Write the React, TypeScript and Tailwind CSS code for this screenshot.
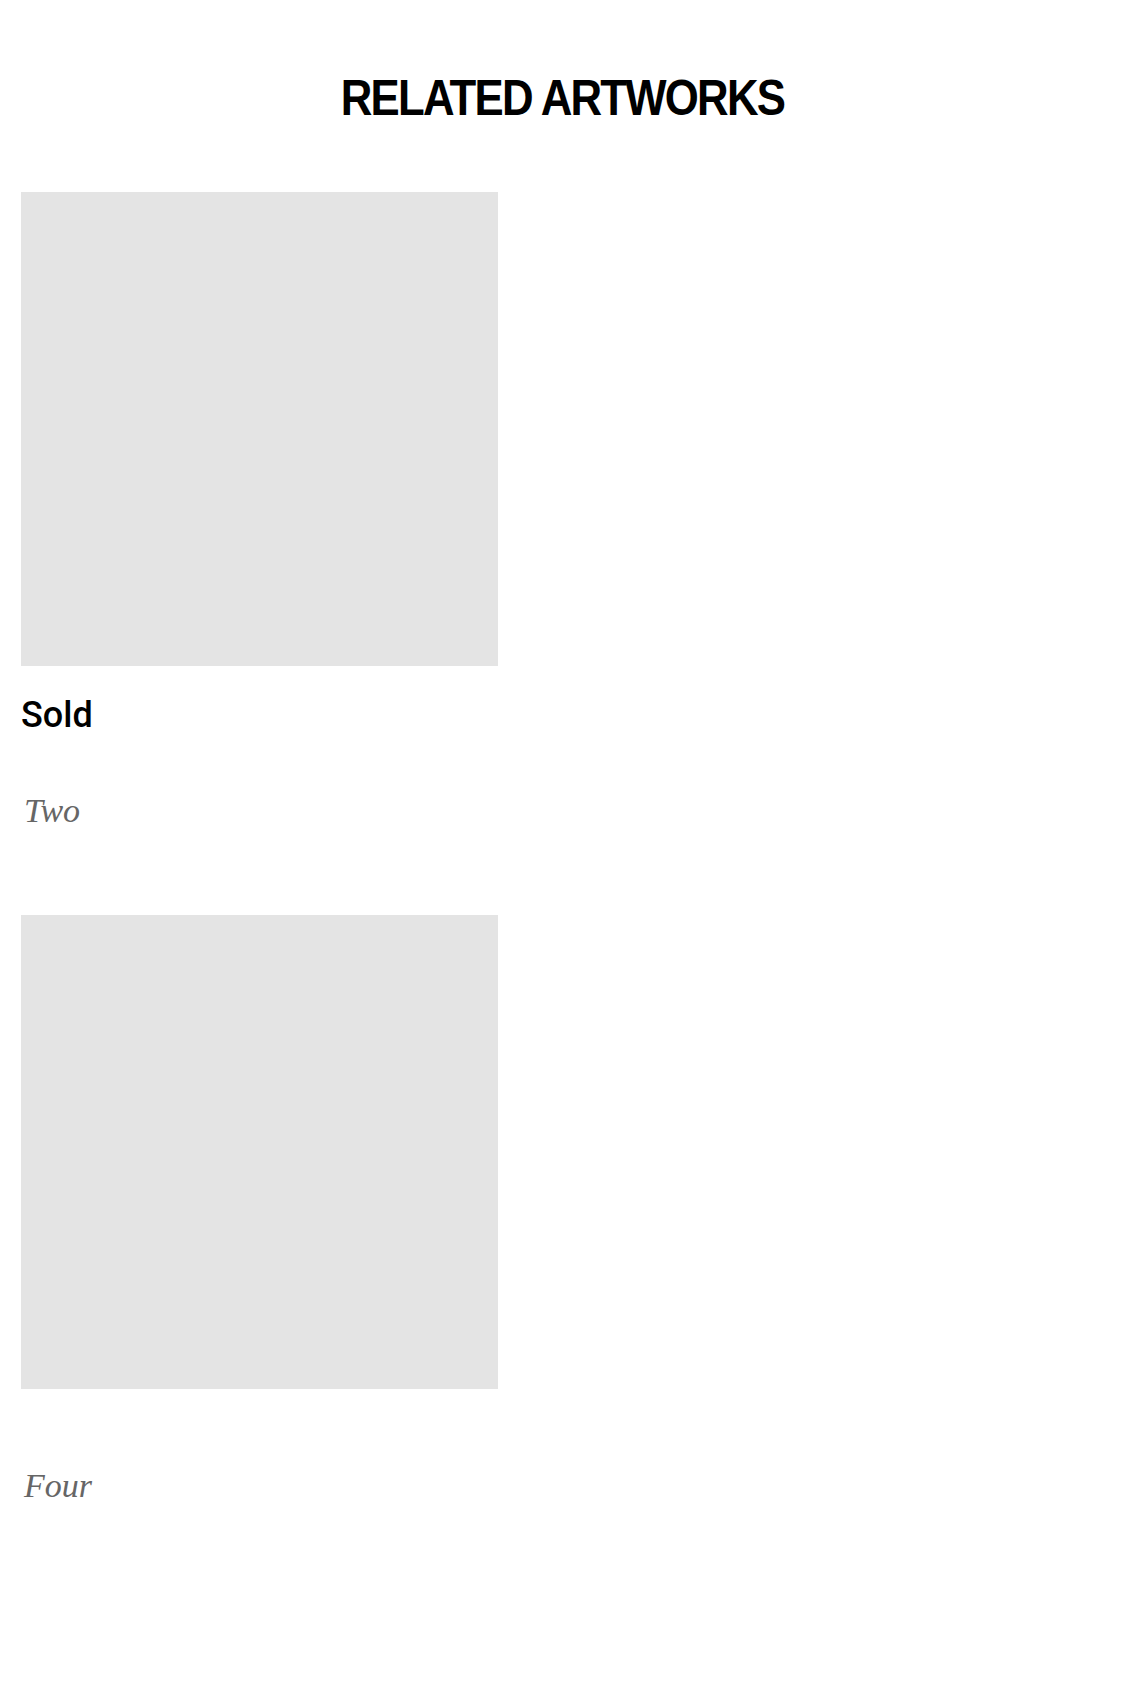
import React from 'react';

type Artwork = {
  title: string;
  sold?: boolean;
};

const artworks: Artwork[] = [
  { title: 'Two', sold: true },
  { title: 'Four' },
];

export default function App() {
  return (
    <div className="min-h-[1692px] w-full bg-white px-[21px] pt-[68px]">
      {/* HEADER */}
      <h2 className="scale-x-[0.875] text-center font-['Liberation_Sans',Arial,sans-serif] text-[50px] font-bold uppercase leading-[60px] tracking-[-2px] text-black">
        Related Artworks
      </h2>

      {/* GRID */}
      <div className="mt-[64px] flex flex-col gap-[84px]">
        {artworks.map((art) => (
          <ArtworkCard key={art.title} art={art} />
        ))}
      </div>
    </div>
  );
}

function ArtworkCard({ art }: { art: Artwork }) {
  return (
    <div className="flex w-[477px] flex-col">
      <div className="h-[474px] w-[477px] bg-[#e4e4e4]" />

      {art.sold && (
        <div className="mt-[27px] font-['Roboto','Liberation_Sans',sans-serif] text-[36px] font-medium leading-[44px] text-black">
          Sold
        </div>
      )}

      <div
        className={`${art.sold ? 'mt-[54px]' : 'mt-[77px]'} pl-[3px] font-['Liberation_Serif','Times_New_Roman',serif] text-[34px] italic leading-[40px] text-[#666666]`}
      >
        {art.title}
      </div>
    </div>
  );
}
